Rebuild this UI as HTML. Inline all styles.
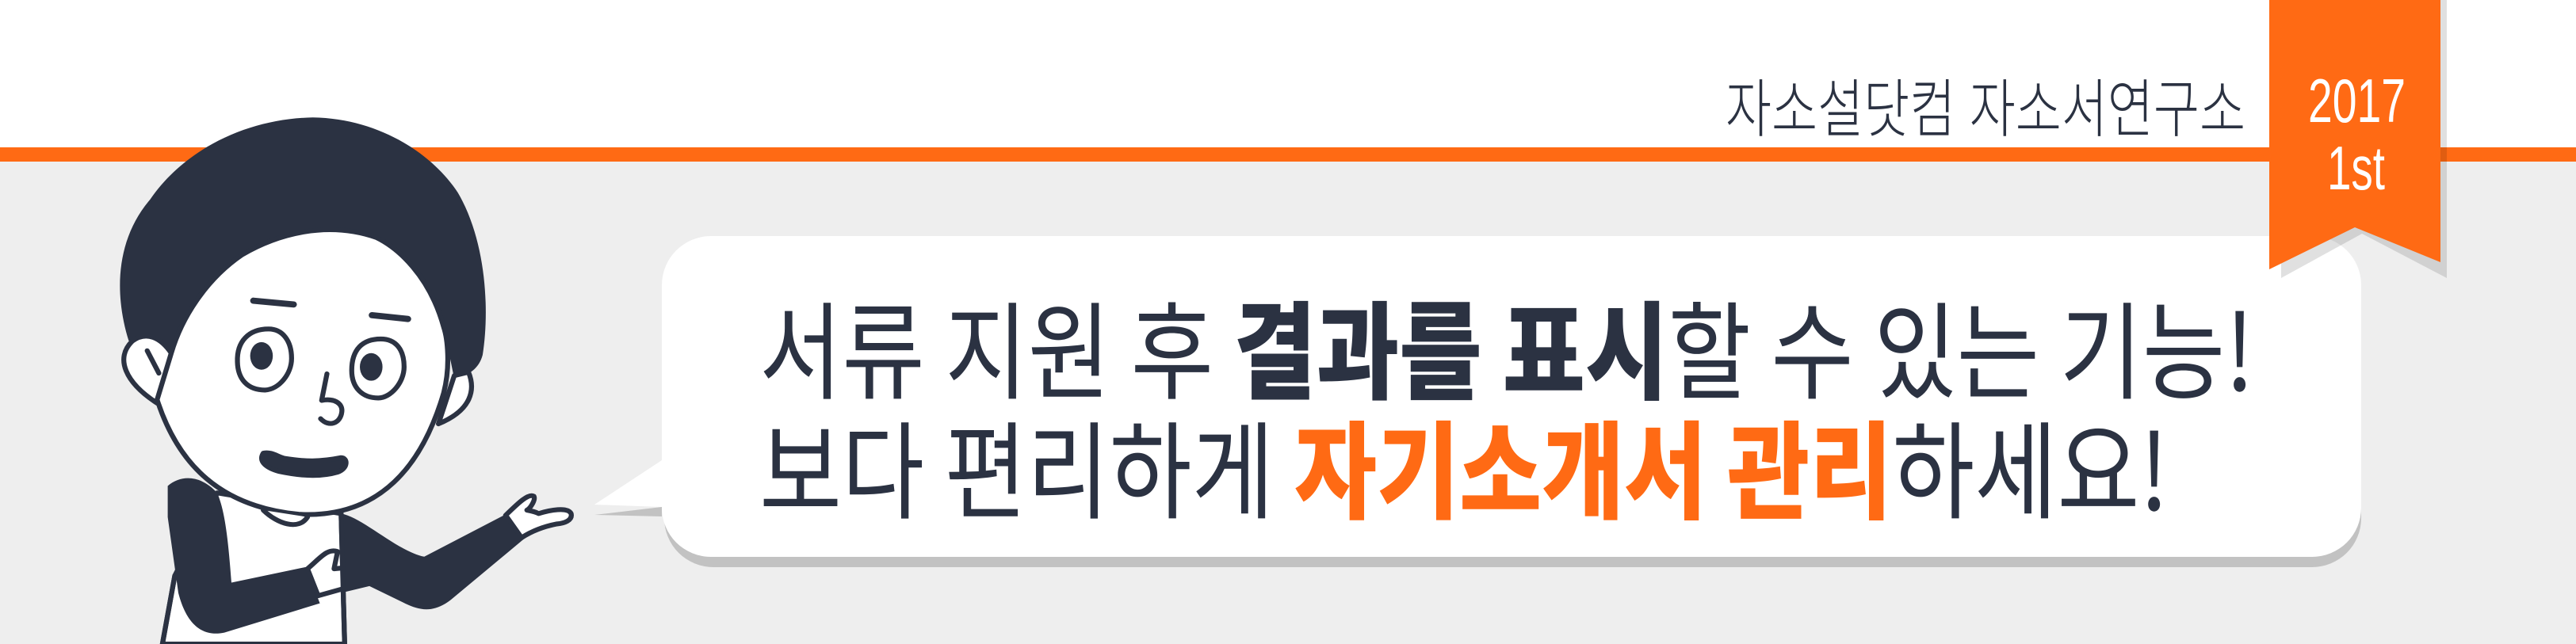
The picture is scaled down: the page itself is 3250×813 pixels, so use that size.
<!DOCTYPE html>
<html><head><meta charset="utf-8"><style>
html,body{margin:0;padding:0}
body{width:3250px;height:813px;position:relative;overflow:hidden;background:#eeeeee;font-family:"Liberation Sans","Noto Sans CJK KR",sans-serif;color:#2b3242}
.abs{position:absolute}
.top{left:0;top:0;width:3250px;height:186px;background:#fff}
.line{left:0;top:186px;width:3250px;height:18px;background:#ff6a14}
.hdr{left:2177px;top:89px;font-size:80px;font-weight:300;white-space:nowrap;transform-origin:left top;line-height:100px}
.t1,.t2{left:958px;white-space:nowrap;font-size:134px;line-height:150px;transform-origin:left top;font-family:"Noto Sans CJK KR",sans-serif;font-weight:400}
.t1{top:360px}
.t2{top:511px}
b{font-weight:900}
.or{color:#ff6a14;font-weight:900}
.rb{color:#fff;font-size:78px;line-height:80px;font-weight:300;white-space:nowrap;transform-origin:left top}
</style></head><body>
<div class="abs top"></div>
<div class="abs line"></div>
<div class="abs hdr" id="hd">자소설닷컴 자소서연구소</div>

<svg class="abs" style="left:0;top:0" width="3250" height="813">
  <path d="M835,640 L750,650 L835,652 Z" fill="#c2c2c2"/>
  <rect x="838" y="312" width="2141" height="404" rx="62" fill="#c2c2c2"/>
  <path d="M835,581 L750,637 L835,640 Z" fill="#fff"/>
  <rect x="835" y="298" width="2144" height="405" rx="62" fill="#fff"/>
  <path d="M2878,0 H3087 V351 L2980,295 L2878,351 Z" fill="#000" opacity="0.12"/>
  <path d="M2863,0 H3079 V331 L2971,287 L2863,340 Z" fill="#ff6a14"/>
</svg>

<div class="abs rb" id="r1" style="top:87px;left:2912px">2017</div>
<div class="abs rb" id="r2" style="top:172px;left:2936px">1st</div>

<div class="abs t1" id="t1">서류 지원 후 <b>결과를 표시</b>할 수 있는 기능!</div>
<div class="abs t2" id="t2">보다 편리하게 <span class="or">자기소개서 관리</span>하세요!</div>

<svg class="abs" style="left:100px;top:130px" width="700" height="683" viewBox="0 0 1568 1568" preserveAspectRatio="none">
  <g stroke="#2b3242" stroke-width="14" stroke-linejoin="round" stroke-linecap="round">
  <path d="M270,1370 L235,1568 L750,1568 L740,1190 L390,1130 Z" fill="#fff"/>
  <path d="M140,690 C100,560 100,400 200,280 C300,130 480,45 660,42 C850,45 1000,150 1070,260 C1150,400 1160,600 1140,730 C1130,770 1100,790 1060,800 L1030,650 C990,500 900,420 840,390 C700,340 560,380 460,440 C360,510 290,620 260,725 C230,680 190,660 140,690 Z" fill="#2b3242" stroke="none"/>
  <path d="M260,725 C230,680 190,660 150,690 C100,740 130,810 220,870 Z" fill="#fff"/>
  <path d="M1060,790 L1100,780 C1120,830 1110,890 1015,930 Z" fill="#fff"/>
  <path d="M192,718 L225,783" fill="none"/>
  <path d="M220,860 C280,1050 400,1170 620,1192 C850,1205 970,1050 1030,840 C1050,760 1040,680 1030,650 C990,500 900,420 840,390 C700,340 560,380 460,440 C360,510 290,620 260,725 Z" fill="#fff"/>
  <path d="M492,573 L606,584 M827,615 L929,626" fill="none" stroke-width="18"/>
  <path d="M535,655 C480,655 445,690 447,750 C448,800 475,832 525,832 C565,830 600,785 600,740 C600,690 575,655 535,655 Z" fill="#fff"/>
  <path d="M852,684 C800,684 770,715 770,775 C770,825 800,855 845,855 C880,855 918,810 918,765 C918,715 895,684 852,684 Z" fill="#fff"/>
  <ellipse cx="515" cy="733" rx="32" ry="40" fill="#2b3242" stroke="none"/>
  <ellipse cx="825" cy="765" rx="32" ry="40" fill="#2b3242" stroke="none"/>
  <path d="M700,785 L685,862 C720,855 745,870 742,895 C738,930 705,940 682,915" fill="none"/>
  <path d="M520,1015 C545,1010 560,1025 580,1030 C640,1040 680,1040 740,1028 C760,1028 760,1060 730,1070 C680,1085 620,1080 565,1068 C530,1058 505,1040 520,1015 Z" fill="#2b3242"/>
  <path d="M520,1180 C560,1220 620,1240 645,1200" fill="#fff"/>
  <path d="M250,1110 C290,1075 345,1080 390,1130 C410,1180 420,1250 430,1390 L640,1345 L680,1450 L410,1535 C340,1550 300,1500 280,1420 L250,1200 Z" fill="#2b3242" stroke="none"/>
  <path d="M645,1350 C680,1320 700,1290 730,1300 L720,1350 L820,1340 C845,1340 845,1380 825,1385 L675,1428 Z" fill="#fff"/>
  <path d="M740,1190 C800,1200 900,1300 975,1315 L1200,1195 L1255,1265 L1050,1440 C1000,1480 960,1470 920,1450 L820,1400 L740,1420 Z" fill="#2b3242" stroke="none"/>
  <path d="M1205,1195 C1240,1160 1270,1130 1285,1140 C1290,1150 1275,1175 1265,1180 C1280,1183 1290,1185 1298,1190 C1330,1180 1380,1170 1390,1190 C1395,1210 1370,1218 1350,1220 C1310,1228 1280,1240 1250,1260 Z" fill="#fff"/>
  <path d="M270,1370 L235,1568 M740,1190 L750,1568" fill="none"/>
  </g>
</svg>
<script>
function fit(id,w){var e=document.getElementById(id);var r=e.getBoundingClientRect().width;e.style.transform='scaleX('+(w/r)+')';}
fit('t1',1886);fit('t2',1778);fit('hd',656);fit('r1',123);fit('r2',73);
</script>
</body></html>
